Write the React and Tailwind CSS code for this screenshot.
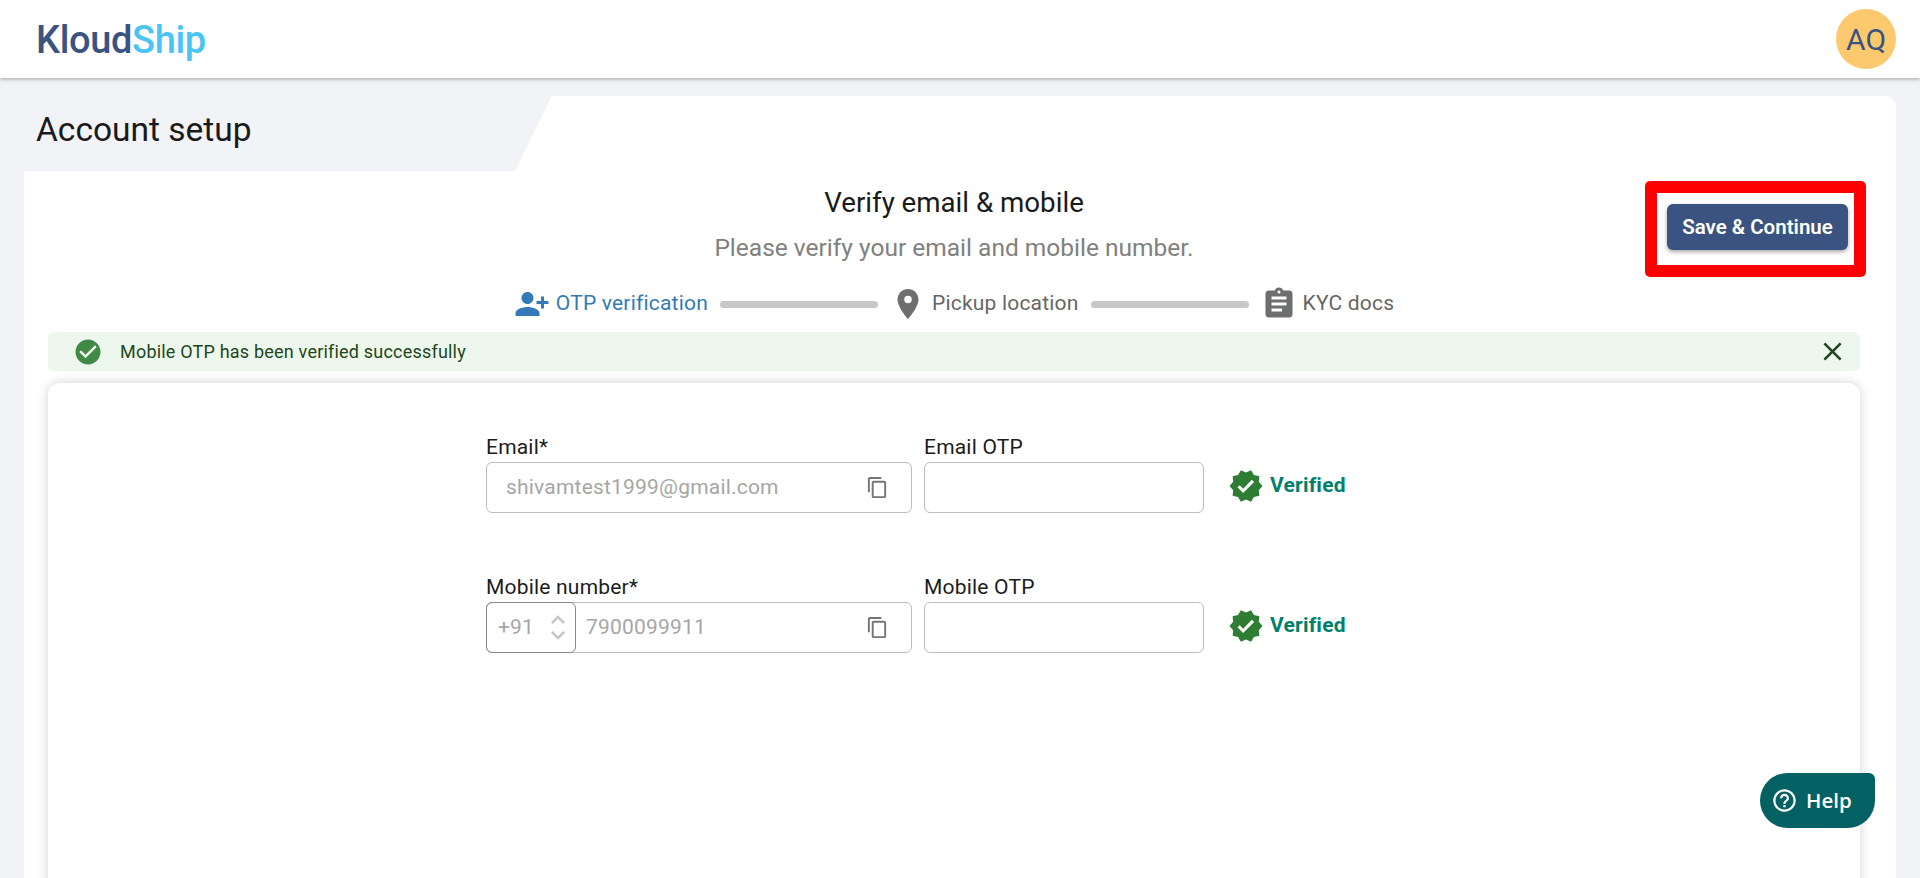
import React from 'react';
import {
  MdCheckCircle,
  MdClose,
  MdContentCopy,
  MdHelpOutline,
  MdKeyboardArrowDown,
  MdKeyboardArrowUp,
  MdPersonAdd,
  MdPlace,
  MdAssignment,
  MdVerified,
} from 'react-icons/md';

const Verified = () => (
  <div className="flex items-center gap-[6px] ml-[24px] h-[50px] pb-[4px]">
    <MdVerified className="w-[36px] h-[36px] text-[#2e7d32]" />
    <span className="text-[21px] tracking-[0.2px] font-bold text-[#00806a]">Verified</span>
  </div>
);

const Label = ({ children }) => (
  <label className="block text-[21px] tracking-[0.2px] leading-[24px] text-[#1c1c1c] mb-[3px]">{children}</label>
);

const CopyIcon = () => <MdContentCopy className="w-[23px] h-[23px] text-[#757575] shrink-0" />;

const Box = ({ className = '', children }) => (
  <div className={`h-[51px] border border-[#bdbdbd] rounded-[6px] bg-white flex items-center ${className}`}>
    {children}
  </div>
);

const Line = () => <div className="w-[158px] h-[7px] rounded-full bg-[#c8c8c8] mx-[12px]" />;

export default function App() {
  return (
    <div className="relative h-screen overflow-hidden bg-[#f2f3f7] font-['Roboto',sans-serif]">
      <header className="h-[78px] bg-white shadow-[0_1px_4px_rgba(0,0,0,0.35)] flex items-center justify-between pl-[36px] pr-[24px] relative">
        <div className="text-[38px] font-medium tracking-[-0.35px] leading-none pt-[2px]">
          <span className="text-[#3a5380]">Kloud</span>
          <span className="text-[#4ac4f5]">Ship</span>
        </div>
        <div className="w-[60px] h-[60px] rounded-full bg-[#fdc96f] text-[#3a5380] text-[30px] flex items-center justify-center">
          AQ
        </div>
      </header>

      <main className="px-[24px] pt-[18px]">
        <div className="bg-white rounded-t-[12px] h-[800px] overflow-hidden">
          <div className="w-[528px] h-[75px] bg-[#f2f3f7] [clip-path:polygon(0_0,100%_0,calc(100%-37px)_100%,0_100%)] flex items-center pl-[12px] pb-[6px] text-[33.5px] text-[#1a1a1a]">
            Account setup
          </div>

          <div className="pl-[24px] pr-[36px]">
            <div className="grid grid-cols-[1fr_auto_1fr] pt-[10px]">
              <div />
              <div className="text-center">
                <h1 className="text-[27.7px] leading-[44px] text-[#1a1a1a]">Verify email &amp; mobile</h1>
                <p className="text-[24.5px] leading-[44px] pt-[1px] text-[#808080]">Please verify your email and mobile number.</p>
              </div>
              <div className="justify-self-end pt-[23px] pr-[12px]">
                <div className="relative">
                  <button className="w-[181px] h-[46px] rounded-[6px] bg-[#3a5380] text-white text-[20.5px] font-semibold shadow-[0_2px_4px_rgba(0,0,0,0.35)]">
                    Save &amp; Continue
                  </button>
                  <div className="absolute -left-[22px] -right-[18px] -top-[23px] -bottom-[27px] border-[12px] border-[#ff0000] rounded-[5px] pointer-events-none" />
                </div>
              </div>
            </div>

            <div className="flex items-center justify-center h-[50px] mt-[9px] text-[21px] tracking-[0.2px] text-[#666666]">
              <MdPersonAdd className="w-[36px] h-[36px] text-[#337ab7] -scale-x-100" />
              <span className="ml-[6px] text-[#337ab7]">OTP verification</span>
              <Line />
              <MdPlace className="w-[36px] h-[36px] text-[#6d6e70]" />
              <span className="ml-[6px]">Pickup location</span>
              <Line />
              <MdAssignment className="w-[36px] h-[36px] text-[#6d6e70]" />
              <span className="ml-[6px]">KYC docs</span>
            </div>

            <div className="mt-[3px] h-[39px] rounded-[6px] bg-[#edf7ed] flex items-center pl-[25px] pr-[12px] text-[#1e4620]">
              <MdCheckCircle className="w-[30px] h-[30px] text-[#418a46]" />
              <span className="ml-[17px] text-[18px] tracking-[0.2px]">Mobile OTP has been verified successfully</span>
              <MdClose className="ml-auto w-[31px] h-[31px]" />
            </div>

            <div className="mt-[12px] h-[600px] bg-white rounded-[12px] shadow-[0_0_12px_rgba(0,0,0,0.18)] pl-[438px] pt-[52px]">
              <div className="flex items-end mb-[62px]">
                <div className="w-[426px]">
                  <Label>Email*</Label>
                  <Box className="pl-[19px] pr-[22px] justify-between">
                    <span className="text-[21px] tracking-[0.2px] text-[#a6a6a6]">shivamtest1999@gmail.com</span>
                    <CopyIcon />
                  </Box>
                </div>
                <div className="w-[280px] ml-[12px]">
                  <Label>Email OTP</Label>
                  <Box />
                </div>
                <Verified />
              </div>

              <div className="flex items-end">
                <div className="w-[426px]">
                  <Label>Mobile number*</Label>
                  <Box className="pr-[22px] justify-between">
                    <div className="flex items-center">
                      <div className="w-[90px] h-[51px] -ml-px border border-[#8a8a8a] rounded-[6px] flex items-center pl-[11px] text-[21px] tracking-[0.2px] text-[#a6a6a6]">
                        +91
                        <div className="ml-[10px] flex flex-col text-[#c4c4c4]">
                          <MdKeyboardArrowUp className="w-[28px] h-[28px] -mb-[13px]" />
                          <MdKeyboardArrowDown className="w-[28px] h-[28px]" />
                        </div>
                      </div>
                      <span className="ml-[10px] text-[21px] tracking-[0.2px] text-[#a6a6a6]">7900099911</span>
                    </div>
                    <CopyIcon />
                  </Box>
                </div>
                <div className="w-[280px] ml-[12px]">
                  <Label>Mobile OTP</Label>
                  <Box />
                </div>
                <Verified />
              </div>
            </div>
          </div>
        </div>
      </main>

      <button className="absolute left-[1760px] top-[773px] w-[115px] h-[55px] bg-[#036063] text-white rounded-tl-[28px] rounded-bl-[28px] rounded-br-[28px] rounded-tr-[6px] flex items-center pl-[11px] gap-[8px] font-['Open_Sans',sans-serif] font-semibold text-[20.5px]">
        <MdHelpOutline className="w-[27px] h-[27px]" />
        Help
      </button>
    </div>
  );
}
